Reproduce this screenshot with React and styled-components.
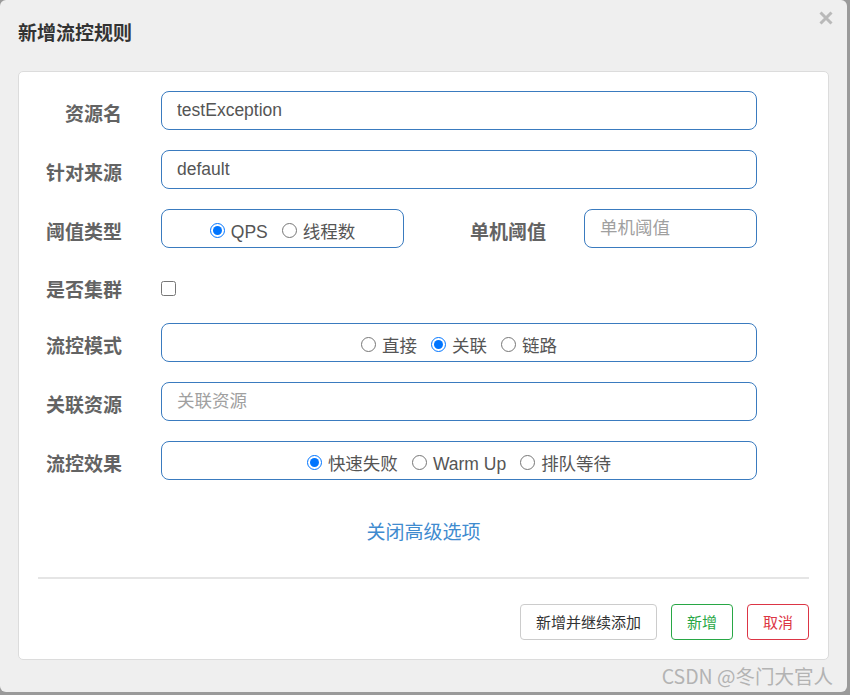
import React from "react";
import styled, { createGlobalStyle } from "styled-components";

const GlobalStyle = createGlobalStyle`
  html, body {
    margin: 0;
    padding: 0;
    background: #9a9a9a;
  }
  body {
    font-family: "Liberation Sans", "Noto Sans CJK SC", sans-serif;
    width: 850px;
    height: 695px;
    overflow: hidden;
  }
  * { box-sizing: border-box; }
`;

const Dialog = styled.div`
  position: relative;
  width: 847px;
  height: 692px;
  background: #efefef;
  border-radius: 6px;
  display: flex;
  flex-direction: column;
`;

const Header = styled.div`
  height: 71px;
  padding: 22px 18px 0;
`;

const Title = styled.h4`
  margin: 0;
  font-size: 19px;
  line-height: 20px;
  font-weight: bold;
  color: #333;
  font-family: "Noto Sans CJK SC", sans-serif;
`;

const CloseButton = styled.button`
  position: absolute;
  top: 11px;
  right: 14px;
  width: 14px;
  height: 14px;
  padding: 0;
  border: 0;
  background: transparent;
  display: flex;
  cursor: pointer;
`;

const Card = styled.div`
  margin: 0 18px;
  height: 589px;
  background: #fff;
  border: 1px solid #dcdcdc;
  border-radius: 5px;
  padding: 19px;
  display: flex;
  flex-direction: column;
`;

const FormRow = styled.div`
  display: grid;
  grid-template-columns: 84px 596px;
  column-gap: 39px;
  height: ${(p) => p.$h || 39}px;
  margin-bottom: ${(p) => (p.$last ? 0 : 20)}px;
  align-items: center;
`;

const Label = styled.label`
  text-align: right;
  font-family: "Noto Sans CJK SC", sans-serif;
  font-weight: bold;
  font-size: 19px;
  line-height: 24px;
  color: #636363;
  white-space: nowrap;
  padding-top: ${(p) => p.$pt || 4}px;
`;

const TextInput = styled.input`
  width: 100%;
  height: 39px;
  border: 1px solid #3a7bbf;
  border-radius: 8px;
  padding: 0 15px;
  font-family: "Liberation Sans", "Noto Sans CJK SC", sans-serif;
  font-size: 17.5px;
  color: #555;
  outline: none;
  background: #fff;
  &::placeholder {
    color: #a0a0a0;
    font-family: "Noto Sans CJK SC", sans-serif;
  }
`;

const RadioBox = styled.div`
  width: 100%;
  height: 39px;
  border: 1px solid #3a7bbf;
  border-radius: 8px;
  display: flex;
  justify-content: center;
  align-items: center;
  gap: 14px;
  padding-top: 7px;
`;

const RadioItem = styled.label`
  display: flex;
  align-items: center;
  gap: 6px;
  font-size: 17.5px;
  line-height: 22px;
  color: #555;
  white-space: nowrap;
`;

const RadioInput = styled.input.attrs({ type: "radio" })`
  width: 15px;
  height: 15px;
  margin: -4px 0 0 0;
  accent-color: #0075ff;
`;

const SplitCell = styled.div`
  display: grid;
  grid-template-columns: 243px 1fr 173px;
  align-items: center;
`;

const SubLabel = styled(Label)`
  padding-right: 38px;
`;

const CheckCell = styled.div`
  display: flex;
  align-items: center;
  padding-top: 6px;
`;

const CheckBox = styled.input.attrs({ type: "checkbox" })`
  width: 15px;
  height: 15px;
  margin: 0;
  accent-color: #0075ff;
`;

const LinkRow = styled.div`
  margin-top: 31px;
  height: 40px;
  display: flex;
  justify-content: center;
  align-items: center;
`;

const ToggleLink = styled.a`
  font-family: "Noto Sans CJK SC", sans-serif;
  font-size: 19px;
  line-height: 24px;
  color: #3f8bcf;
  text-decoration: none;
  cursor: pointer;
`;

const Divider = styled.hr`
  margin: 26px 0 0;
  border: 0;
  height: 2px;
  background: #e5e5e5;
`;

const Footer = styled.div`
  margin-top: 25px;
  display: flex;
  justify-content: flex-end;
  gap: 14px;
`;

const variants = {
  default: { border: "#cccccc", color: "#333" },
  success: { border: "#28a745", color: "#28a745" },
  danger: { border: "#dc3545", color: "#dc3545" },
};

const Button = styled.button`
  height: 36px;
  padding: 0 15px;
  border-radius: 4px;
  background: #fff;
  border: 1px solid ${(p) => variants[p.$variant].border};
  color: ${(p) => variants[p.$variant].color};
  font-family: "Noto Sans CJK SC", sans-serif;
  font-size: 15px;
  line-height: 20px;
  cursor: pointer;
`;

const Watermark = styled.div`
  position: absolute;
  top: 664px;
  right: 14px;
  font-family: "Noto Sans CJK SC", sans-serif;
  font-size: 19.5px;
  line-height: 24px;
  color: #b3b3b3;
  white-space: nowrap;
  pointer-events: none;
`;

function CloseIcon() {
  return (
    <svg width="14" height="14" viewBox="0 0 14 14">
      <path d="M1.5 1.5 L12.5 12.5 M12.5 1.5 L1.5 12.5" stroke="#b9b9b9" strokeWidth="3" strokeLinecap="butt" />
    </svg>
  );
}

export default function App() {
  return (
    <>
      <GlobalStyle />
      <Dialog>
        <Header>
          <Title>新增流控规则</Title>
        </Header>
        <CloseButton aria-label="关闭">
          <CloseIcon />
        </CloseButton>
        <Card>
          <FormRow>
            <Label>资源名</Label>
            <TextInput defaultValue="testException" />
          </FormRow>
          <FormRow>
            <Label>针对来源</Label>
            <TextInput defaultValue="default" />
          </FormRow>
          <FormRow>
            <Label>阈值类型</Label>
            <SplitCell>
              <RadioBox>
                <RadioItem>
                  <RadioInput name="grade" defaultChecked />
                  QPS
                </RadioItem>
                <RadioItem>
                  <RadioInput name="grade" />
                  线程数
                </RadioItem>
              </RadioBox>
              <SubLabel>单机阈值</SubLabel>
              <TextInput placeholder="单机阈值" />
            </SplitCell>
          </FormRow>
          <FormRow $h={35}>
            <Label $pt={7}>是否集群</Label>
            <CheckCell>
              <CheckBox />
            </CheckCell>
          </FormRow>
          <FormRow>
            <Label>流控模式</Label>
            <RadioBox>
              <RadioItem>
                <RadioInput name="strategy" />
                直接
              </RadioItem>
              <RadioItem>
                <RadioInput name="strategy" defaultChecked />
                关联
              </RadioItem>
              <RadioItem>
                <RadioInput name="strategy" />
                链路
              </RadioItem>
            </RadioBox>
          </FormRow>
          <FormRow>
            <Label>关联资源</Label>
            <TextInput placeholder="关联资源" />
          </FormRow>
          <FormRow $last>
            <Label>流控效果</Label>
            <RadioBox>
              <RadioItem>
                <RadioInput name="behavior" defaultChecked />
                快速失败
              </RadioItem>
              <RadioItem>
                <RadioInput name="behavior" />
                Warm Up
              </RadioItem>
              <RadioItem>
                <RadioInput name="behavior" />
                排队等待
              </RadioItem>
            </RadioBox>
          </FormRow>
          <LinkRow>
            <ToggleLink>关闭高级选项</ToggleLink>
          </LinkRow>
          <Divider />
          <Footer>
            <Button $variant="default">新增并继续添加</Button>
            <Button $variant="success">新增</Button>
            <Button $variant="danger">取消</Button>
          </Footer>
        </Card>
        <Watermark>CSDN @冬门大官人</Watermark>
      </Dialog>
    </>
  );
}
